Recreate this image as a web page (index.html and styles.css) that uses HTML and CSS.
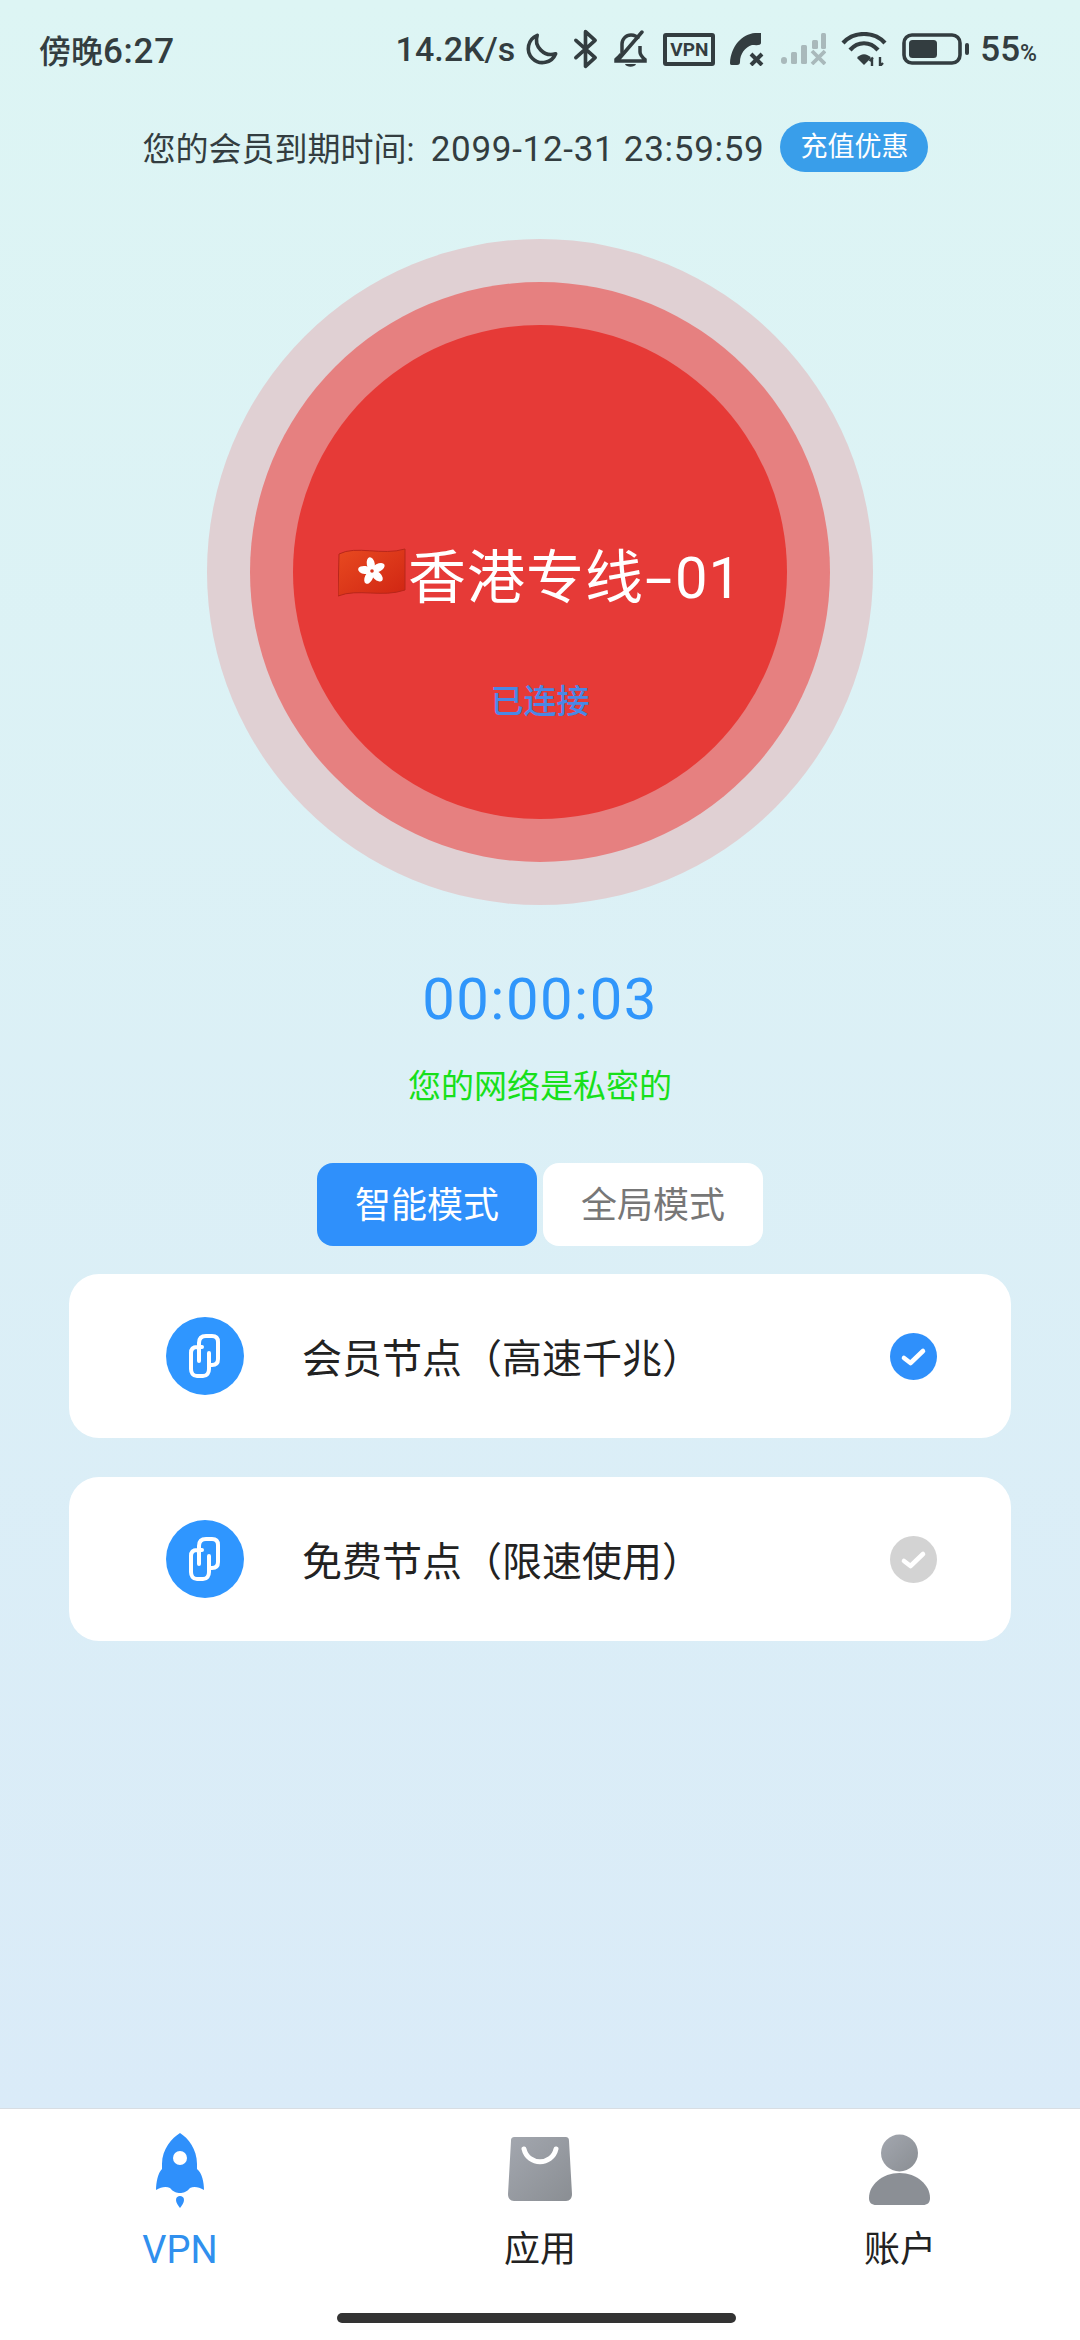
FILE: index.html
```html
<!DOCTYPE html>
<html lang="zh-CN">
<head>
  <meta charset="UTF-8" />
  <meta name="viewport" content="width=device-width, initial-scale=1.0"/>
  <title>VPN</title>
  <link rel="stylesheet" href="styles.css">
</head>
<body>

<div class="app">
  <div class="main">
    <div class="status-bar">
      <span class="status-time">傍晚<span class="status-clock">6:27</span></span>
      <div class="status-right">
        <span class="status-speed">14.2K/s</span>
        <svg width="34" height="36" viewBox="0 0 36 36"><path d="M14 3.500A15 15 0 1 0 33.500 23A15.500 15.500 0 0 1 14 3.500Z" fill="none" stroke="#333d40" stroke-width="3.800" stroke-linejoin="round"/></svg>
        <svg width="25" height="40" viewBox="0 0 26 40"><path d="M3 11L23 29L13 38V2L23 11L3 29" fill="none" stroke="#333d40" stroke-width="3.800" stroke-linejoin="round" stroke-linecap="round"/></svg>
        <svg width="35" height="38" viewBox="0 0 35 38"><path d="M9 24V14C9 9 13 5 18 5C21 5 24 6.500 25.500 9M27 16V22C27 25 29 27 32 29.500V31H3V29.500C5 28 7 26.500 8 24" fill="none" stroke="#333d40" stroke-width="3.500"/><path d="M5 30L29 2" stroke="#333d40" stroke-width="3.500" stroke-linecap="round"/><path d="M12 34H23C22 37.500 13 37.500 12 34Z" fill="#333d40"/></svg>
        <div class="vpn-badge">VPN</div>
        <svg width="34" height="34" viewBox="0 0 34 34"><path d="M31 1H25C12 2 1 14 0 31C0 33 1 33 3 33H7C9 33 10 32 10 30C10 22 15 15 22 13C25 13 31 14 31 11Z" fill="#333d40"/><path d="M21 22L32 33M32 22L21 33" stroke="#333d40" stroke-width="4"/></svg>
        <svg width="47" height="32" viewBox="0 0 47 32"><g fill="#a9b9bb"><rect x="2" y="24" width="6" height="7" rx="3"/><rect x="12" y="19" width="6" height="12" rx="1.500"/><rect x="22" y="12" width="6" height="19" rx="1.500"/><rect x="33" y="7" width="6" height="9" rx="1.500"/><rect x="42" y="0" width="5" height="16" rx="1.500"/></g><path d="M33 18L46 31M46 18L33 31" stroke="#a9b9bb" stroke-width="3.800"/></svg>
        <svg width="46" height="34" viewBox="0 0 46 34"><g fill="none" stroke="#333d40" stroke-width="4.200"><path d="M2 11C13 -1 33 -1 44 11"/><path d="M9 18C17 9 29 9 37 18"/></g><path d="M16 26C20 21 26 21 30 26L23 33Z" fill="#333d40"/><path d="M31 34V26M28.500 29L32 25.500M39 34V25M39 34L42 31" stroke="#333d40" stroke-width="2.400" fill="none"/></svg>
        <svg width="67" height="32" viewBox="0 0 67 32"><rect x="2" y="2" width="56" height="28" rx="8" fill="none" stroke="#333d40" stroke-width="3.600"/><rect x="7" y="7" width="28" height="18" rx="3.500" fill="#333d40"/><rect x="63" y="10" width="4" height="12" rx="2" fill="#333d40"/></svg>
        <span class="status-batt">55<small>%</small></span>
      </div>
    </div>

    <div class="expire-row">
      <span class="expire-text">您的会员到期时间: <span class="expire-date">2099-12-31 23:59:59</span></span>
      <span class="expire-btn">充值优惠</span>
    </div>

    <div class="ring-outer">
      <div class="ring-mid">
        <div class="ring-inner">
          <div class="node-title">
            <svg class="flag" width="68" height="50" viewBox="0 0 68 50">
              <defs><linearGradient id="flagRed" x1="0" y1="0" x2="1" y2="1"><stop offset="0" stop-color="#e84a20"/><stop offset="1" stop-color="#d02513"/></linearGradient></defs>
              <path d="M1 6C18 -3 44 8 67 1V42C44 50 20 40 0 48Z" fill="url(#flagRed)" stroke="#b8261a" stroke-width="1"/>
              <g transform="translate(34 23)">
                <g fill="#fff">
                  <ellipse cx="0" cy="-7" rx="4" ry="7" transform="rotate(-10)"/>
                  <ellipse cx="0" cy="-7" rx="4" ry="7" transform="rotate(62)"/>
                  <ellipse cx="0" cy="-7" rx="4" ry="7" transform="rotate(134)"/>
                  <ellipse cx="0" cy="-7" rx="4" ry="7" transform="rotate(206)"/>
                  <ellipse cx="0" cy="-7" rx="4" ry="7" transform="rotate(278)"/>
                </g>
                <circle cx="0" cy="0" r="1.800" fill="#d8341c"/>
              </g>
            </svg>
            <span class="node-name">香港专线<span class="node-dash">-</span>01</span>
          </div>
          <div class="node-state">已连接</div>
        </div>
      </div>
    </div>

    <div class="timer">00:00:03</div>
    <div class="private">您的网络是私密的</div>

    <div class="modes">
      <div class="mode active">智能模式</div>
      <div class="mode">全局模式</div>
    </div>

    <div class="cards">
      <div class="card">
        <svg class="link-icon" width="78" height="78" viewBox="0 0 78 78">
          <circle cx="39" cy="39" r="39" fill="#2f96ff"/>
          <path d="M33 44V26C33 21 36 19 40 19H46C50 19 52 21 52 25V42C52 46 50 48 46 48H44M36 30H31C27 30 25 32 25 36V52C25 56 27 59 31 59H37C41 59 43 56 43 52V36" fill="none" stroke="#fff" stroke-width="4" stroke-linecap="round"/>
        </svg>
        <span class="card-name">会员节点（高速千兆）</span>
        <svg class="check" width="47" height="47" viewBox="0 0 47 47"><circle cx="23.500" cy="23.500" r="23.500" fill="#2f90fb"/><path d="M14 25L20.500 30L33 18" fill="none" stroke="#fff" stroke-width="4.600" stroke-linecap="round" stroke-linejoin="round"/></svg>
      </div>
      <div class="card">
        <svg class="link-icon" width="78" height="78" viewBox="0 0 78 78">
          <circle cx="39" cy="39" r="39" fill="#2f96ff"/>
          <path d="M33 44V26C33 21 36 19 40 19H46C50 19 52 21 52 25V42C52 46 50 48 46 48H44M36 30H31C27 30 25 32 25 36V52C25 56 27 59 31 59H37C41 59 43 56 43 52V36" fill="none" stroke="#fff" stroke-width="4" stroke-linecap="round"/>
        </svg>
        <span class="card-name">免费节点（限速使用）</span>
        <svg class="check" width="47" height="47" viewBox="0 0 47 47"><circle cx="23.500" cy="23.500" r="23.500" fill="#d3d3d3"/><path d="M14 25L20.500 30L33 18" fill="none" stroke="#fff" stroke-width="4.600" stroke-linecap="round" stroke-linejoin="round"/></svg>
      </div>
    </div>
  </div>

  <div class="tabbar">
    <div class="tab active">
      <svg width="50" height="75" viewBox="0 0 50 75">
        <path d="M25 0C33 5 42 16 42 31V36C47 40 49 49 49 57C44 54 39 53 35 55C32 59 28 60 25 60C22 60 18 59 15 55C11 53 6 54 1 57C1 49 3 40 7 36V31C7 16 17 5 25 0Z" fill="#2f90fb"/>
        <circle cx="25" cy="25" r="7" fill="#fff"/>
        <path d="M25 75C23 72 21 70 21 67C21 64 23 63 25 63C27 63 29 64 29 67C29 70 27 72 25 75Z" fill="#2f90fb"/>
      </svg>
      <span class="tab-vpn">VPN</span>
    </div>
    <div class="tab">
      <svg width="64" height="75" viewBox="0 0 64 75">
        <defs><linearGradient id="greyA" x1="0" y1="0" x2="1" y2="1"><stop offset="0" stop-color="#a3a7af"/><stop offset="1" stop-color="#8a8e93"/></linearGradient></defs>
        <path d="M7 4H57C60 4 61 5 61 8L64 61C64 65 62 68 58 68H6C2 68 0 65 0 61L3 8C3 5 4 4 7 4Z" fill="url(#greyA)"/>
        <path d="M16 16C20 33 44 33 48 16" fill="none" stroke="#fff" stroke-width="5" stroke-linecap="round"/>
      </svg>
      <span>应用</span>
    </div>
    <div class="tab">
      <svg width="62" height="75" viewBox="0 0 62 75">
        <defs><linearGradient id="greyB" x1="0" y1="0" x2="1" y2="1"><stop offset="0" stop-color="#a3a7af"/><stop offset="1" stop-color="#8a8e93"/></linearGradient></defs>
        <circle cx="30.500" cy="20" r="18.500" fill="url(#greyB)"/>
        <path d="M30.500 40C48 40 61 52 61 65C61 70 58 72 54 72H7C3 72 0 70 0 65C0 52 13 40 30.500 40Z" fill="#8b8f95"/>
      </svg>
      <span>账户</span>
    </div>
    <div class="home-bar"></div>
  </div>
</div>

</body>
</html>
```

FILE: styles.css
```css
html, body {
  margin: 0;
  padding: 0;
}
body {
  width: 1080px;
  height: 2340px;
  overflow: hidden;
  font-family: Roboto, "Noto Sans CJK SC", sans-serif;
  color: #333d40;
}
.app {
  height: 2340px;
  display: flex;
  flex-direction: column;
}
.main {
  flex: 1;
  display: flex;
  flex-direction: column;
  align-items: center;
  background: linear-gradient(180deg, #ddf5f4 0%, #daebf8 100%);
}
.status-bar {
  width: 100%;
  box-sizing: border-box;
  height: 98px;
  padding: 0 43px 0 39px;
  display: flex;
  align-items: center;
  justify-content: space-between;
}
.status-time {
  font-size: 32px;
  font-weight: 500;
}
.status-clock {
  font-size: 35px;
  letter-spacing: 0.7px;
}
.status-right {
  display: flex;
  align-items: center;
  gap: 15px;
}
.status-speed {
  font-size: 34px;
  font-weight: 500;
  margin-right: -6px;
}
.status-batt {
  font-size: 35px;
  font-weight: 500;
  margin-left: -4px;
}
.status-batt small {
  font-size: 23px;
}
.vpn-badge {
  box-sizing: border-box;
  width: 52px;
  height: 33px;
  border: 4px solid #333d40;
  border-radius: 3px;
  font-size: 19px;
  font-weight: 700;
  line-height: 25px;
  text-align: center;
}
.expire-row {
  margin-top: 24px;
  height: 50px;
  padding-right: 9px;
  display: flex;
  align-items: center;
  gap: 16px;
}
.expire-text {
  font-size: 33px;
}
.expire-date {
  font-size: 35px;
  letter-spacing: 0.7px;
  margin-left: 8px;
}
.expire-btn {
  width: 148px;
  height: 50px;
  line-height: 50px;
  border-radius: 25px;
  background: #399eea;
  color: white;
  font-size: 27px;
  text-align: center;
}
.ring-outer {
  margin-top: 67px;
  padding: 43px;
  border-radius: 50%;
  background: #e0d0d3;
}
.ring-mid {
  padding: 43px;
  border-radius: 50%;
  background: #e68080;
}
.ring-inner {
  box-sizing: border-box;
  width: 494px;
  height: 494px;
  padding-top: 212px;
  border-radius: 50%;
  background: #e63a37;
  display: flex;
  flex-direction: column;
  align-items: center;
}
.node-title {
  height: 72px;
  display: flex;
  align-items: center;
  gap: 2px;
  color: white;
  font-size: 58px;
  white-space: nowrap;
}
.node-name {
  letter-spacing: 1px;
}
.node-dash {
  display: inline-block;
  margin: 0 7px;
  transform: scaleX(1.7);
}
.node-state {
  margin-top: 71px;
  line-height: 44px;
  font-size: 33px;
  font-weight: 500;
  color: #4a88e6;
}
.timer {
  margin-top: 62px;
  line-height: 64px;
  font-size: 58px;
  letter-spacing: 1.5px;
  color: #3096fb;
}
.private {
  margin-top: 34px;
  line-height: 44px;
  font-size: 33px;
  color: #17e01a;
}
.modes {
  margin-top: 54px;
  display: flex;
  gap: 6px;
}
.mode {
  width: 220px;
  height: 83px;
  line-height: 86px;
  text-align: center;
  border-radius: 16px;
  background: white;
  color: #777;
  font-size: 36px;
}
.mode.active {
  background: #2f90fb;
  color: white;
}
.cards {
  margin-top: 28px;
  width: 942px;
  display: flex;
  flex-direction: column;
  gap: 39px;
}
.card {
  height: 164px;
  box-sizing: border-box;
  padding: 0 74px 0 97px;
  background: white;
  border-radius: 30px;
  display: flex;
  align-items: center;
}
.link-icon {
  margin-right: 58px;
}
.card-name {
  flex: 1;
  font-size: 40px;
  color: #222;
}
.tabbar {
  height: 232px;
  box-sizing: border-box;
  position: relative;
  border-top: 1px solid #d8dde2;
  background: white;
  display: grid;
  grid-template-columns: repeat(3, 1fr);
  padding-top: 24px;
}
.tab {
  display: flex;
  flex-direction: column;
  align-items: center;
  font-size: 36px;
  line-height: 44px;
  color: #222;
}
.tab svg {
  margin-bottom: 20px;
}
.tab.active {
  color: #3090ee;
}
.tab-vpn {
  font-size: 38px;
}
.home-bar {
  position: absolute;
  left: 337px;
  bottom: 17px;
  width: 399px;
  height: 10px;
  border-radius: 5px;
  background: #333;
}
```
